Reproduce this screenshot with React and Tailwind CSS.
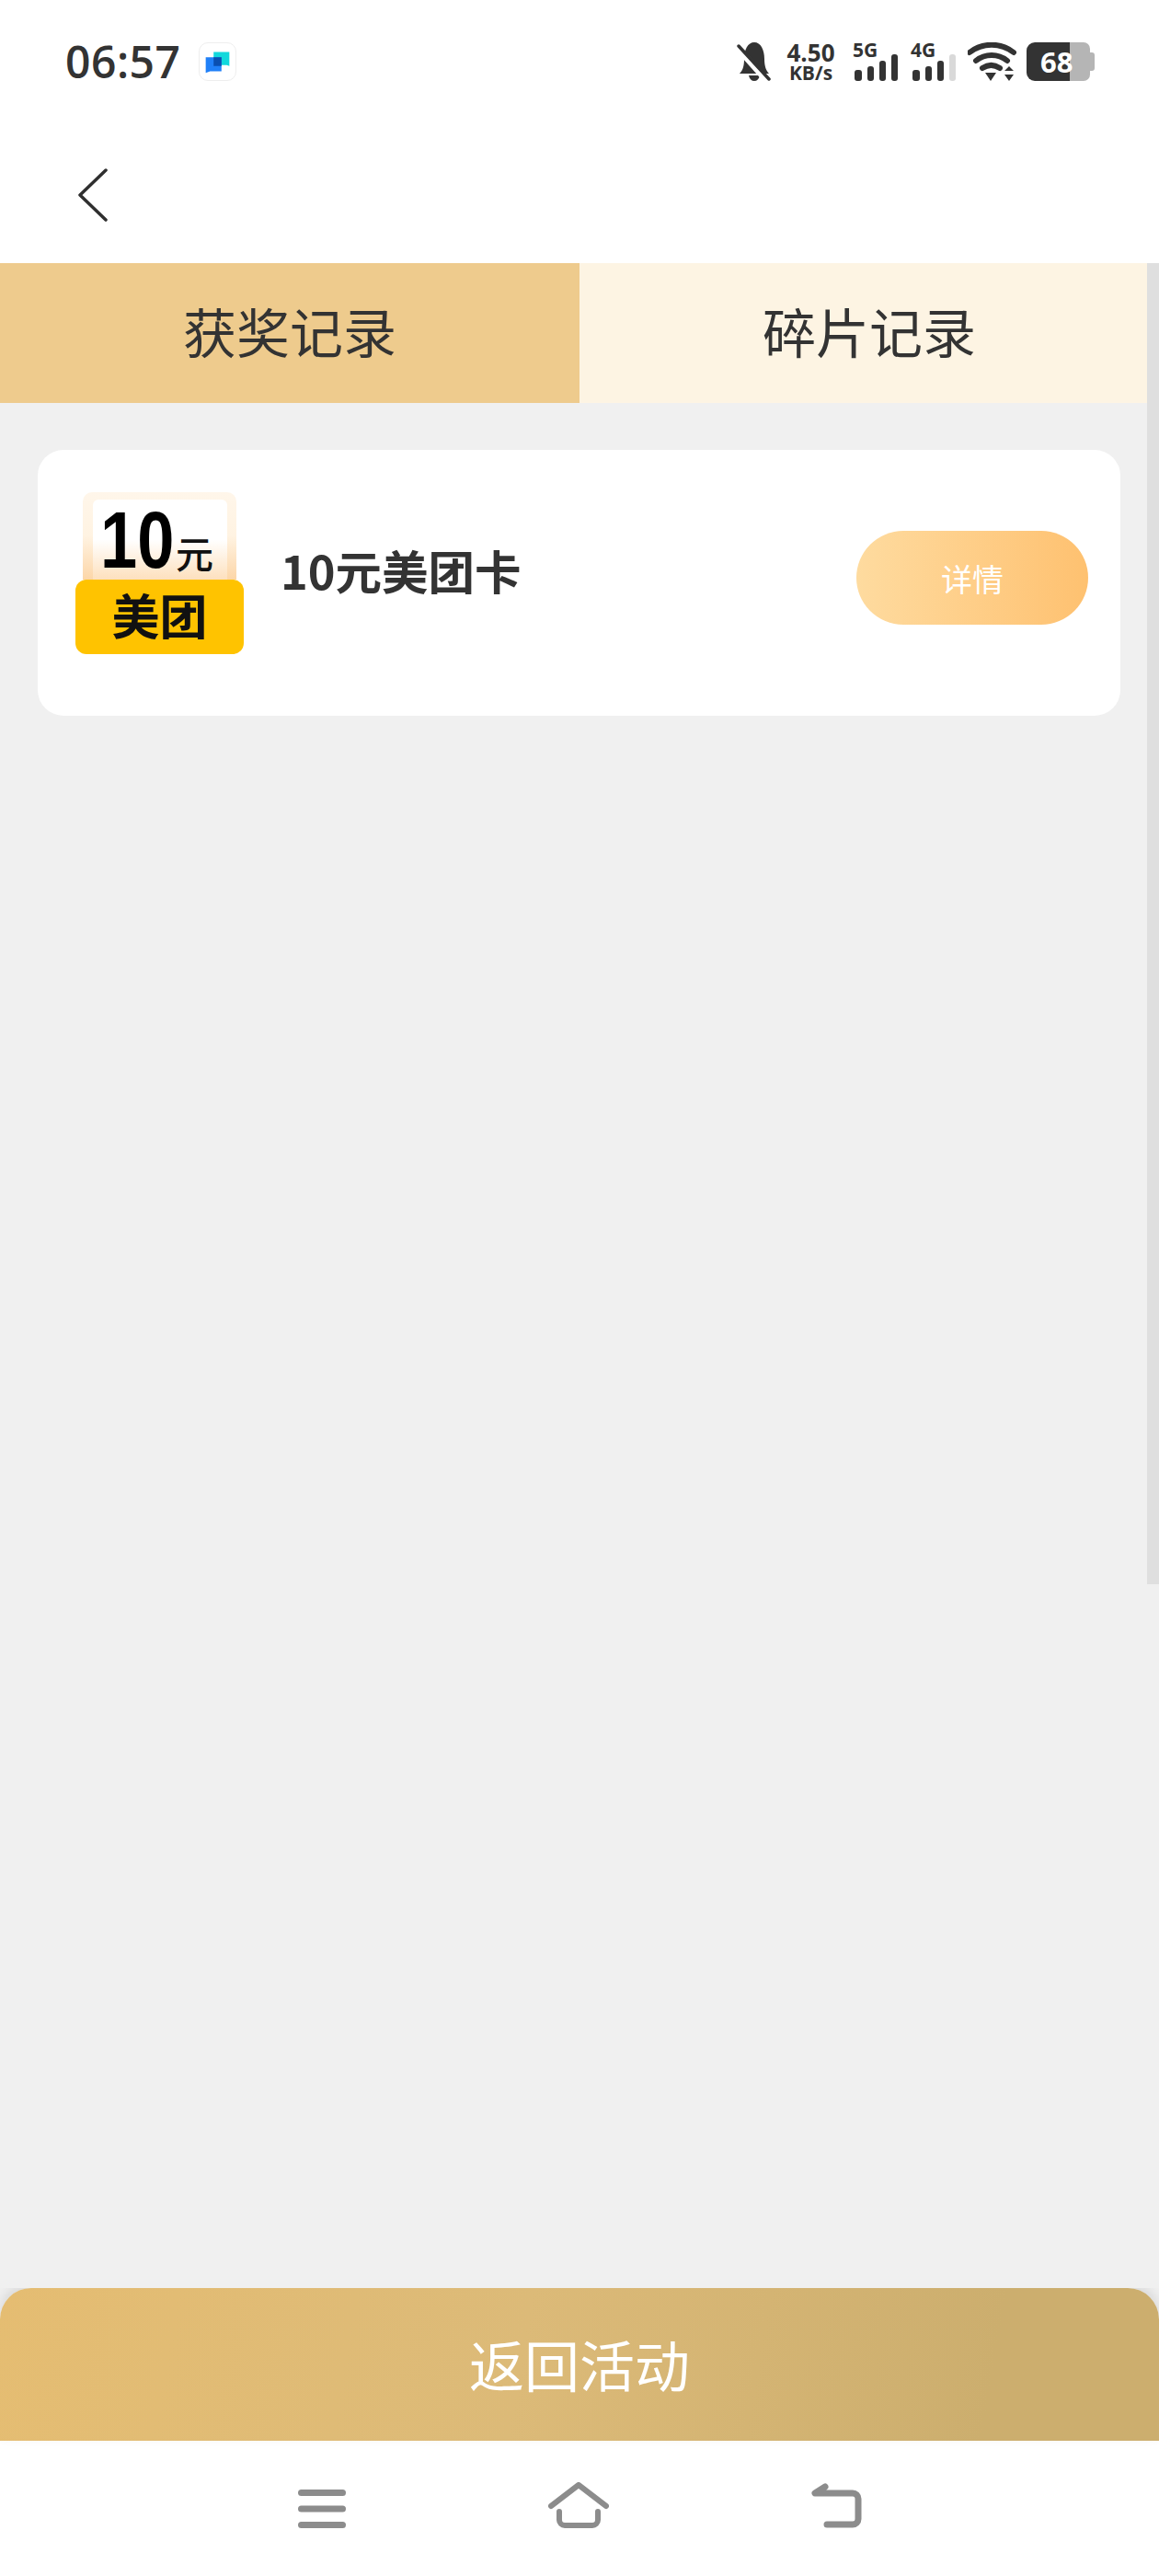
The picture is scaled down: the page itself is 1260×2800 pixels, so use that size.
// App.jsx
const CJK = 'font-["Noto_Sans_CJK_SC","Noto_Sans",sans-serif]'

function CellIcon({ label, lastBar }) {
  return (
    <div className="relative h-[42px] w-[50px]">
      <svg width="50" height="42" viewBox="0 0 50 42" fill="#333">
        <rect x="2" y="30" width="8" height="12" rx="3" />
        <rect x="16" y="26" width="7" height="16" rx="3" />
        <rect x="29" y="20" width="7" height="22" rx="3" />
        <rect x="42" y="13" width="7" height="29" rx="3" fill={lastBar} />
      </svg>
      <span className='absolute left-0 top-0 font-["Open_Sans",sans-serif] text-[21px] font-bold leading-[17px] text-[#333]'>{label}</span>
    </div>
  )
}

function StatusBar() {
  return (
    <div className="flex h-[134px] items-center justify-between pl-[71px] pr-[70px]">
      <div className="flex items-center gap-[20px]">
        <span className='font-["Open_Sans",sans-serif] text-[48px] font-semibold leading-none tracking-[0.5px] text-[#333]'>06:57</span>
        <div className="h-[42px] w-[41px] rounded-[10px] border border-[#eeeeee] bg-white">
          <svg width="39" height="40" viewBox="0 0 41 42">
            <path d="M16 10h18v16l-3-1H16z" fill="#12d8dc" />
            <path d="M7 16h18v16H12l-5 2z" fill="#2080f8" />
            <rect x="16" y="16" width="9" height="10" fill="#0a4fb0" />
          </svg>
        </div>
      </div>
      <div className="flex items-center">
        <svg width="37" height="42" viewBox="0 0 37 42" fill="#333">
          <path d="M3 34c3-3 5-7 5-16C8 8 12 0 19 0s11 8 11 18c0 8 2 13 5 16z" />
          <path d="M13 36h12c-1 4-3 6-6 6s-5-2-6-6z" />
          <path d="M1 6 33 42" stroke="#fff" strokeWidth="7" />
          <path d="M2 4 35 40" stroke="#333" strokeWidth="3.5" strokeLinecap="round" />
        </svg>
        <div className='ml-[17px] flex w-[53px] flex-col items-center font-["Open_Sans",sans-serif] font-bold text-[#333]'>
          <span className="text-[26px] leading-[24px]">4.50</span>
          <span className="whitespace-nowrap text-[21px] leading-[20px]">KB/s</span>
        </div>
        <div className="ml-[19px]">
          <CellIcon label="5G" lastBar="#333" />
        </div>
        <div className="ml-[13px]">
          <CellIcon label="4G" lastBar="#d9d9d9" />
        </div>
        <svg className="ml-[12px]" width="53" height="42" viewBox="0 0 53 42" fill="#333">
          <path d="M2 11C16 0 36 0 50 11" fill="none" stroke="#333" strokeWidth="6" strokeLinecap="round" />
          <path d="M9 20c10-8 24-8 34 0" fill="none" stroke="#333" strokeWidth="6" strokeLinecap="round" />
          <path d="M16 28c6-4 13-4 19 0" fill="none" stroke="#333" strokeWidth="6" strokeLinecap="round" />
          <path d="M19 33h12l-6 9z" />
          <path d="M40 31h10l-5-5zM40 35h10l-5 7z" />
        </svg>
        <div className="relative ml-[11px] flex h-[42px] w-[74px] items-center">
          <div className="h-full w-[47px] rounded-l-[9px] bg-[#333]" />
          <div className="h-full w-[22px] rounded-r-[7px] bg-[#b5b5b5]" />
          <div className="h-[20px] w-[5px] rounded-r-[3px] bg-[#b5b5b5]" />
          <span className='absolute left-[15px] top-0 font-["Open_Sans",sans-serif] text-[31px] font-bold leading-[42px] text-white'>68</span>
        </div>
      </div>
    </div>
  )
}

function PrizeLogo() {
  return (
    <div className="flex h-[176px] w-[183px] flex-col items-center">
      <div className="relative h-[95px] w-[167px] rounded-t-[10px] bg-gradient-to-b from-[#fff6ea] via-[#fff3e2] to-[#fcd6a8]">
        <div className="mx-auto mt-[8px] h-[87px] w-[146px] rounded-t-[6px] bg-gradient-to-b from-white via-white to-[#fde0bd]" />
        <div className="absolute left-[19px] top-[10px] flex items-end">
          <span className='mr-[-18px] origin-left scale-x-[0.82] font-["Liberation_Sans",sans-serif] text-[88px] font-bold leading-[84px] text-black'>10</span>
          <span className={`${CJK} mb-[8px] ml-[2px] text-[41px] font-medium leading-[42px] text-[#111]`}>元</span>
        </div>
      </div>
      <div className={`${CJK} flex h-[81px] w-full items-center justify-center rounded-[12px] bg-[#ffc300] pb-[5px] text-[52px] font-bold leading-none text-[#111]`}>
        美团
      </div>
    </div>
  )
}

function PrizeCard() {
  return (
    <div className="mx-[41px] mt-[51px] flex h-[289px] w-[1177px] items-start rounded-[28px] bg-white pl-[41px] pr-[35px] pt-[46px]">
      <PrizeLogo />
      <div className={`${CJK} ml-[40px] mt-[49px] text-[50.5px] font-bold leading-[70px] text-[#333]`}>10元美团卡</div>
      <button className={`${CJK} ml-auto mt-[42px] flex h-[102px] w-[252px] items-center justify-center rounded-full bg-gradient-to-r from-[#fedb9f] to-[#fec170] text-[34px] text-white`}>
        详情
      </button>
    </div>
  )
}

export default function App() {
  return (
    <div className="flex h-[2800px] w-[1260px] flex-col bg-white">
      <StatusBar />
      <div className="flex h-[152px] items-center pl-[85px] pt-[3px]">
        <svg width="32" height="58" viewBox="0 0 32 58" fill="none" stroke="#2f2f2f" strokeWidth="3.5" strokeLinecap="round" strokeLinejoin="round">
          <path d="M30 2 2 29l28 27" />
        </svg>
      </div>
      <div className="relative flex-1 bg-[#f0f0f0]">
        <div className={`${CJK} flex h-[152px] text-[58px] leading-none text-[#333]`}>
          <div className="flex w-[630px] items-center justify-center bg-[#eecb8d] pb-[6px]">获奖记录</div>
          <div className="flex w-[630px] items-center justify-center bg-[#fdf4e3] pb-[6px]">碎片记录</div>
        </div>
        <PrizeCard />
        <div className="absolute right-0 top-0 h-[1436px] w-[13px] bg-[#dfdfdf]" />
      </div>
      <div className="bg-[#f0f0f0]">
        <button className={`${CJK} flex h-[166px] w-full items-center justify-center rounded-t-[34px] bg-[linear-gradient(100deg,#e5bd72,#dcba78_45%,#ccae6e_85%)] pb-[2px] text-[60px] text-white shadow-[0_-6px_14px_rgba(0,0,0,0.1)]`}>
          返回活动
        </button>
      </div>
      <div className="flex h-[147px] items-end justify-center gap-[220px] pb-[52px]">
        <svg width="52" height="42" viewBox="0 0 52 42" fill="#8c8c8c">
          <rect width="52" height="7" rx="3.5" />
          <rect y="17.5" width="52" height="7" rx="3.5" />
          <rect y="35" width="52" height="7" rx="3.5" />
        </svg>
        <svg width="66" height="50" viewBox="0 0 66 50" fill="none" stroke="#8c8c8c" strokeWidth="6" strokeLinecap="round" strokeLinejoin="round">
          <path d="M3 26 33 3l30 23" />
          <path d="M12 32v9a6 6 0 0 0 6 6h30a6 6 0 0 0 6-6v-9" />
        </svg>
        <svg width="55" height="49" viewBox="0 0 55 49" fill="none" stroke="#8c8c8c" strokeWidth="7" strokeLinecap="round" strokeLinejoin="round">
          <path d="M15 4 4 11h41a6 6 0 0 1 6 6v22a6 6 0 0 1-6 6H17" />
        </svg>
      </div>
    </div>
  )
}
